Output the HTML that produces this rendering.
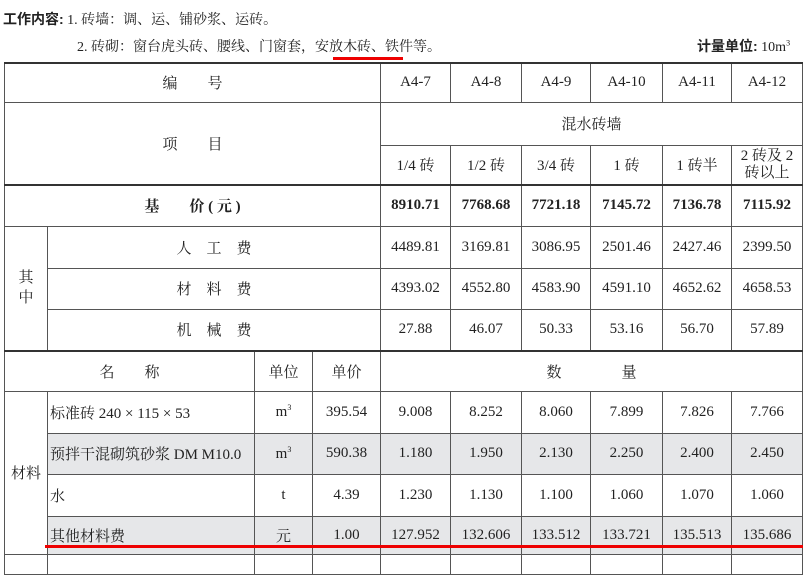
<!DOCTYPE html>
<html><head><meta charset="utf-8"><style>
body{margin:0;background:#fff;width:806px;height:561px;overflow:hidden;position:relative;font-family:"Liberation Serif","Noto Serif CJK SC",serif;color:#222}
.t{position:absolute;font-size:14px;white-space:nowrap}
table{position:absolute;left:4px;top:62px;border-collapse:collapse;table-layout:fixed;font-size:15px}
td{border:1px solid #555;text-align:center;padding:0;overflow:hidden}
.g td.s{background:#e6e7e9}
.l{text-align:left;padding-left:2px}
.b td{font-weight:bold}
.tk{border-top:2px solid #333}
</style></head><body>
<div class="t" style="left:3px;top:9px"><b style="font-family:'Liberation Sans','Noto Sans CJK SC',sans-serif">工作内容:</b> 1. 砖墙：调、运、铺砂浆、运砖。</div>
<div class="t" style="left:77px;top:36px">2. 砖砌：窗台虎头砖、腰线、门窗套，安放木砖、铁件等。</div>
<div style="position:absolute;left:333px;top:57px;width:70px;height:3px;background:#e00"></div>
<div class="t" style="left:697px;top:36px"><b style="font-family:'Liberation Sans','Noto Sans CJK SC',sans-serif">计量单位:</b> 10m<sup style="font-size:8px">3</sup></div>
<table>
<colgroup><col style="width:43px"><col style="width:207px"><col style="width:58px"><col style="width:68px"><col style="width:70px"><col style="width:71px"><col style="width:69px"><col style="width:72px"><col style="width:69px"><col style="width:71px"></colgroup>
<tr style="height:39px" class="tk"><td colspan="4" class="tk">编　　号</td><td class="tk">A4-7</td><td class="tk">A4-8</td><td class="tk">A4-9</td><td class="tk">A4-10</td><td class="tk">A4-11</td><td class="tk">A4-12</td></tr>
<tr style="height:43px"><td colspan="4" rowspan="2">项　　目</td><td colspan="6">混水砖墙</td></tr>
<tr style="height:40px"><td>1/4 砖</td><td>1/2 砖</td><td>3/4 砖</td><td>1 砖</td><td>1 砖半</td><td style="line-height:17px">2 砖及 2<br>砖以上</td></tr>
<tr style="height:41px" class="b"><td colspan="4" class="tk">基　　价 ( 元 )</td><td class="tk">8910.71</td><td class="tk">7768.68</td><td class="tk">7721.18</td><td class="tk">7145.72</td><td class="tk">7136.78</td><td class="tk">7115.92</td></tr>
<tr style="height:42px"><td rowspan="3" style="line-height:20px">其<br>中</td><td colspan="3">人　工　费</td><td>4489.81</td><td>3169.81</td><td>3086.95</td><td>2501.46</td><td>2427.46</td><td>2399.50</td></tr>
<tr style="height:41px"><td colspan="3">材　料　费</td><td>4393.02</td><td>4552.80</td><td>4583.90</td><td>4591.10</td><td>4652.62</td><td>4658.53</td></tr>
<tr style="height:42px"><td colspan="3">机　械　费</td><td>27.88</td><td>46.07</td><td>50.33</td><td>53.16</td><td>56.70</td><td>57.89</td></tr>
<tr style="height:40px"><td colspan="2" class="tk">名　　称</td><td class="tk">单位</td><td class="tk">单价</td><td colspan="6" class="tk">数　　　　量</td></tr>
<tr style="height:42px"><td rowspan="4">材料</td><td class="l">标准砖 240 × 115 × 53</td><td>m<sup style="font-size:8px">3</sup></td><td>395.54</td><td>9.008</td><td>8.252</td><td>8.060</td><td>7.899</td><td>7.826</td><td>7.766</td></tr>
<tr style="height:41px" class="g"><td class="l s">预拌干混砌筑砂浆 DM M10.0</td><td class="s">m<sup style="font-size:8px">3</sup></td><td class="s">590.38</td><td class="s">1.180</td><td class="s">1.950</td><td class="s">2.130</td><td class="s">2.250</td><td class="s">2.400</td><td class="s">2.450</td></tr>
<tr style="height:42px"><td class="l">水</td><td>t</td><td>4.39</td><td>1.230</td><td>1.130</td><td>1.100</td><td>1.060</td><td>1.070</td><td>1.060</td></tr>
<tr style="height:38px" class="g"><td class="l s">其他材料费</td><td class="s">元</td><td class="s">1.00</td><td class="s">127.952</td><td class="s">132.606</td><td class="s">133.512</td><td class="s">133.721</td><td class="s">135.513</td><td class="s">135.686</td></tr>
<tr style="height:20px"><td></td><td></td><td></td><td></td><td></td><td></td><td></td><td></td><td></td><td></td></tr>
</table>
<div style="position:absolute;left:45px;top:545px;width:758px;height:3px;background:#e00"></div>
</body></html>
